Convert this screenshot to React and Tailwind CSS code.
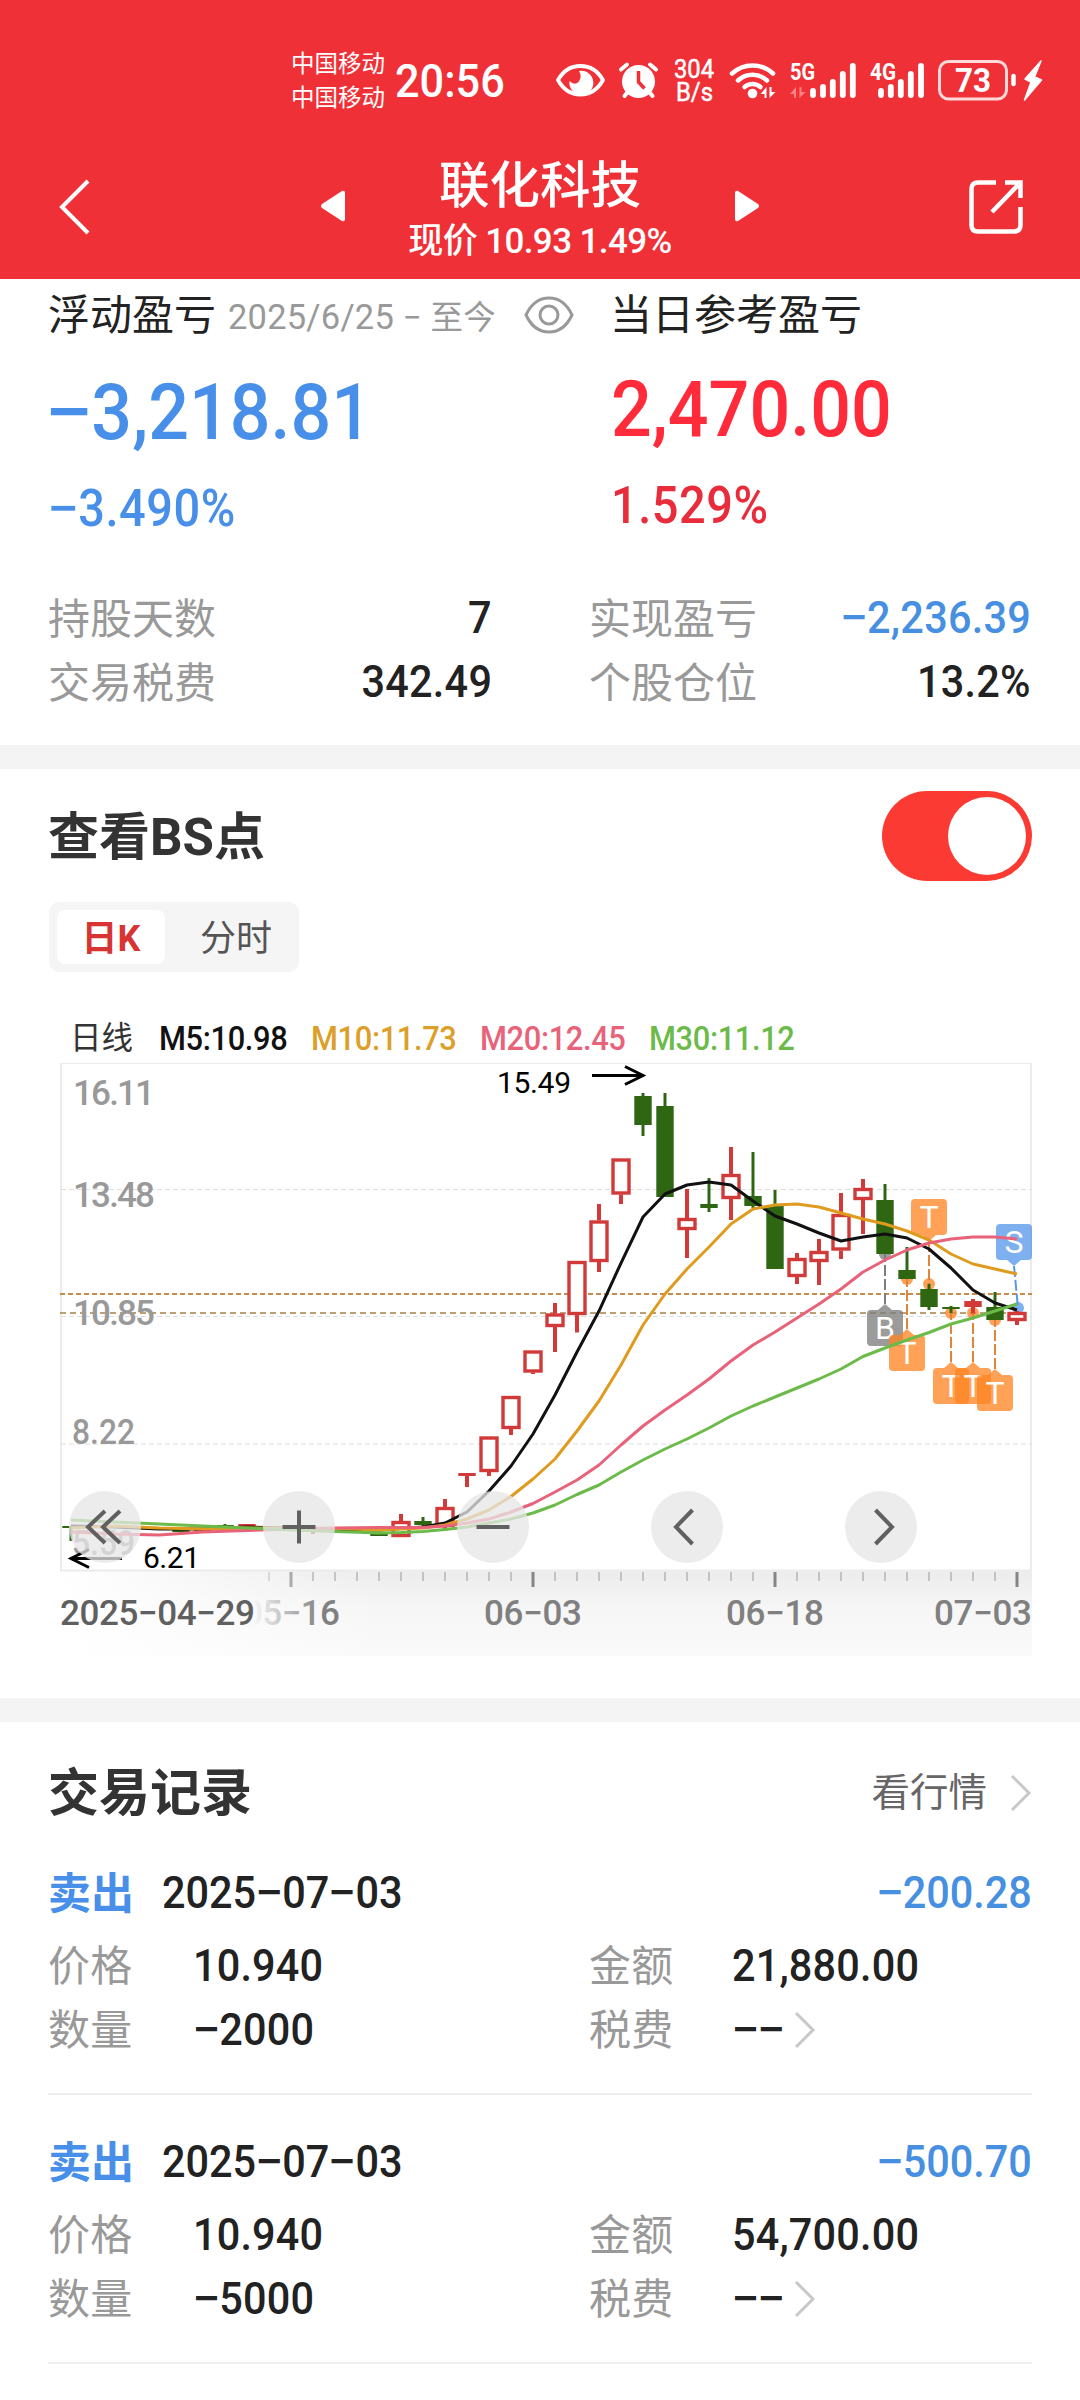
import React, { useState } from "react";

const FONT = "font-[Roboto,'Noto_Sans_CJK_SC',sans-serif]";

const stats = [
  { label: "持股天数", value: "7" },
  { label: "实现盈亏", value: "−2,236.39", loss: true },
  { label: "交易税费", value: "342.49" },
  { label: "个股仓位", value: "13.2%" },
];

const records = [
  { side: "卖出", date: "2025−07−03", profit: "−200.28", price: "10.940", amount: "21,880.00", count: "−2000", fee: "−−" },
  { side: "卖出", date: "2025−07−03", profit: "−500.70", price: "10.940", amount: "54,700.00", count: "−5000", fee: "−−" },
];

// [x, body top, body bottom, high, low, up, filled]
const candles = [
  [71, 1526, 1528, 1526, 1541, false],
  [159, 1528, 1530, 1528, 1530, false],
  [181, 1530, 1532, 1530, 1532, false],
  [203, 1529, 1531, 1529, 1531, true, true],
  [225, 1525, 1527, 1524, 1527, false],
  [247, 1524, 1526, 1524, 1526, true, true],
  [313, 1529, 1531, 1528, 1534, true, true],
  [379, 1534, 1536, 1534, 1536, false],
  [401, 1521, 1537, 1514, 1537, true],
  [423, 1521, 1525, 1517, 1527, false],
  [445, 1507, 1527, 1499, 1531, true],
  [467, 1473, 1476, 1473, 1487, true, true],
  [489, 1436.5, 1472, 1436.5, 1476, true],
  [511, 1396, 1429, 1396, 1435, true],
  [533, 1350.5, 1372.5, 1350.5, 1374, true],
  [555, 1313.5, 1327, 1303, 1352, true],
  [577, 1261, 1315, 1261, 1332.5, true],
  [599, 1220.5, 1262, 1204, 1272, true],
  [621, 1158.5, 1194.5, 1158.5, 1204, true],
  [643, 1096, 1125, 1093, 1136, false],
  [665, 1106, 1197, 1093, 1197, false],
  [687, 1218, 1230, 1189, 1258, true],
  [709, 1204, 1208, 1178, 1212, false],
  [731, 1174, 1199, 1147, 1220, true],
  [753, 1196, 1206, 1152, 1208, false],
  [775, 1205, 1269, 1190, 1269, false],
  [797, 1258, 1277, 1253, 1284, true],
  [819, 1251, 1262, 1239, 1285, true],
  [841, 1214, 1250.5, 1193, 1259, true],
  [863, 1188, 1200, 1179, 1234, true],
  [885, 1200, 1254, 1184, 1254, false],
  [907, 1270, 1279, 1247, 1279, false],
  [929, 1289, 1307, 1284, 1310, false],
  [951, 1307, 1309, 1306, 1313, false],
  [973, 1301, 1307, 1299, 1314, true, true],
  [995, 1307, 1320, 1292, 1320, false],
  [1017, 1312, 1321, 1311, 1325, true],
];

const lines = {
  m5: "71,1526 115,1527 159,1529 203,1529 247,1527 291,1528 335,1530 379,1530 423,1527 445,1523 467,1512 489,1491 511,1466 533,1434 555,1395 577,1352 599,1311 621,1263 643,1217 665,1194 687,1185 709,1182 731,1185 753,1201 775,1216 797,1224 819,1233 841,1241 863,1237 885,1234 907,1238 929,1249 951,1268 973,1290 995,1303 1017,1310",
  m10: "71,1528 115,1526 159,1528 203,1529 247,1528 291,1528 335,1528.5 379,1530 423,1528 445,1525 467,1519 489,1510 511,1496.5 533,1479 555,1459 577,1431 599,1401 621,1365 643,1325 665,1294 687,1269 709,1247 731,1224 753,1209 775,1205 797,1204 819,1207 841,1213 863,1219 885,1224 907,1231 929,1240 951,1254 973,1264 995,1269 1017,1274",
  m20: "71,1532 115,1534 159,1535 203,1532 247,1530.5 291,1529 335,1528 379,1527.5 423,1527.5 445,1526 467,1523 489,1519 511,1512 533,1503.5 555,1492 577,1480 599,1465 621,1445 643,1426 665,1410 687,1395 709,1379 731,1361 753,1345 775,1332 797,1318 819,1304 841,1289 863,1272 885,1260 907,1250 929,1243 951,1239 973,1237 995,1237 1017,1239",
  m30: "71,1520 115,1522 159,1524 203,1526 247,1528 291,1530 335,1531.5 379,1533 401,1532.5 423,1531.5 445,1529.5 467,1527 489,1523 511,1519 533,1513 555,1505 577,1494.5 599,1485 621,1472 643,1460 665,1449 687,1439 709,1428 731,1416 753,1406 775,1397 797,1388 819,1379 841,1369 863,1356.5 885,1348 907,1340 929,1332.5 951,1324 973,1318 995,1311 1017,1304",
};

const tags = [
  { x: 885, dot: 1254, tip: 1304, text: "B", color: "#7d7d7d" },
  { x: 907, dot: 1279, tip: 1329, text: "T", color: "#ff8523" },
  { x: 929, dot: 1284, tip: 1241, text: "T", color: "#ff8523", down: true },
  { x: 951, dot: 1313, tip: 1362, text: "T", color: "#ff8523" },
  { x: 973, dot: 1313, tip: 1362, text: "T", color: "#ff8523" },
  { x: 995, dot: 1320, tip: 1369, text: "T", color: "#ff8523" },
  { x: 1014, dotX: 1018, dot: 1308, tip: 1266, text: "S", color: "#5698ec", down: true },
];

// Figures are set slightly condensed, with a wider minus sign
function Num({ children, right }) {
  return (
    <span className={`inline-block scale-x-[0.92] whitespace-nowrap ${right ? "origin-right" : "origin-left"}`}>
      {children.split(/(−)/).map((part, i) =>
        part === "−" ? (
          <span key={i} className="mx-[0.035em] inline-block scale-x-[1.22]">
            −
          </span>
        ) : (
          part
        )
      )}
    </span>
  );
}

function StatusBar() {
  return (
    <div className="flex h-[125px] items-start pt-[45px] pl-[291px] text-white">
      <div className="flex w-[104px] flex-col pt-[2px] text-[23.5px] leading-[34px]">
        <span>中国移动</span>
        <span>中国移动</span>
      </div>
      <div className="h-[70px] w-[145px] text-[47px] leading-[71px] font-medium">
        <Num>20:56</Num>
      </div>
      <svg width="540" height="80" viewBox="540 45 540 80" className="block shrink-0" fill="none" stroke="#fff">
        <path d="M558 80 Q566 66 580.5 66 Q595 66 603 80 Q595 94.500 580.5 94.500 Q566 94.500 558 80Z" strokeWidth="3.8" strokeLinejoin="round" />
        <path d="M579 71 a12 12 0 1 1 -9.500 10 q5 5 9 1 q4 -5 0.500 -11Z" fill="#fff" stroke="none" />
        <circle cx="638.5" cy="81.500" r="16.500" fill="#fff" stroke="none" />
        <path d="M621 69.500l6 -5M656 69.500l-6 -5M624.500 96l4 -5M652.500 96l-4 -5" strokeWidth="4" strokeLinecap="round" />
        <path d="M638.500 71v11l6 6.500" stroke="#f03037" strokeWidth="3.500" />
        <text x="674" y="77.500" fontSize="25" textLength="40" lengthAdjust="spacingAndGlyphs" fill="#fff" stroke="#fff" strokeWidth="0.5">304</text>
        <text x="676" y="100.500" fontSize="25" textLength="37" lengthAdjust="spacingAndGlyphs" fill="#fff" stroke="#fff" strokeWidth="0.5">B/s</text>
        <g strokeWidth="4.500" strokeLinecap="round">
          <path d="M732 73.500a30 30 0 0 1 41 0" />
          <path d="M738 80.500a21 21 0 0 1 29 0" />
          <path d="M744.500 87a12 12 0 0 1 16 0" />
        </g>
        <circle cx="752.500" cy="93.500" r="4.800" fill="#fff" stroke="none" />
        <path d="M766.500 87v11h-2v-4h-4ZM769.500 87v11l6 -6h-4v-5Z" fill="#fff" stroke="none" />
        <text x="790" y="79.500" fontSize="24" fontWeight="700" textLength="25" lengthAdjust="spacingAndGlyphs" fill="#fff" stroke="none">5G</text>
        <path d="M796 87v11h-2v-4h-4ZM799.500 87v11l6 -6h-4v-5Z" fill="#ff8085" stroke="none" />
        <g strokeWidth="5.800" strokeLinecap="round">
          <path d="M813 91v4M823 87v8M832.800 82v13M842.800 74v21M852.800 66v29" />
          <path d="M881 91v4M890.800 87v8M900.800 82v13M910.800 74v21M921 66v29" />
        </g>
        <text x="870" y="79.500" fontSize="24" fontWeight="700" textLength="26" lengthAdjust="spacingAndGlyphs" fill="#fff" stroke="none">4G</text>
        <rect x="939.500" y="61.500" width="67" height="37.500" rx="9" strokeWidth="3" stroke="#ffd9da" />
        <text x="955" y="92" fontSize="34" fontWeight="700" textLength="36" lengthAdjust="spacingAndGlyphs" fill="#fff" stroke="none">73</text>
        <path d="M1013.500 76v8" strokeWidth="4.500" strokeLinecap="round" />
        <path d="M1041 61l-16 18 6 3 -6.500 18 17 -20 -7 -3Z" fill="#fff" strokeWidth="1.500" strokeLinejoin="round" />
      </svg>
    </div>
  );
}

function Header() {
  return (
    <header className="h-[279px] bg-[#f03037]">
      <StatusBar />
      <div className="flex items-start pl-[57px] text-white">
        <svg width="34" height="58" viewBox="0 0 34 58" className="mt-[53px]" fill="none" stroke="#fff" strokeWidth="4">
          <path d="M31 3 L5 29 L31 55" />
        </svg>
        <svg width="26" height="34" viewBox="0 0 26 34" className="mt-[64px] ml-[229px]" fill="#fff">
          <path d="M22 2 Q25 1 25 4 V30 Q25 33 22 32 L2 19 Q0 17 2 15Z" />
        </svg>
        <div className="ml-[54px] flex w-[280px] flex-col items-center pt-[28px]">
          <div className="text-[50.500px] leading-[66px] font-medium">联化科技</div>
          <div className="text-[35px] leading-[45px] font-medium tracking-[-0.600px] whitespace-nowrap">现价 10.93 1.49%</div>
        </div>
        <svg width="26" height="34" viewBox="0 0 26 34" className="mt-[64px] ml-[54px]" fill="#fff">
          <path d="M4 2 Q1 1 1 4 V30 Q1 33 4 32 L24 19 Q26 17 24 15Z" />
        </svg>
        <svg width="56" height="56" viewBox="0 0 56 56" className="mt-[54px] ml-[208px]" fill="none" stroke="#fff" strokeWidth="4.500">
          <path d="M28 3.500 H10 Q3.500 3.500 3.500 10 V46 Q3.500 52.500 10 52.500 H46 Q52.500 52.500 52.500 46 V28" />
          <path d="M37 3.500 H52.500 V19 M52 4 L24 33" />
        </svg>
      </div>
    </header>
  );
}

function Summary() {
  return (
    <section className="h-[466px] px-[48px]">
      <div className="flex h-[72px] items-center">
        <span className="w-[180px] pt-px text-[42px] text-[#222]">浮动盈亏</span>
        <span className="w-[296px] pt-[6px] text-[34.500px] tracking-[0.2px] whitespace-nowrap text-[#999]">
          2025/6/25 <span className="text-[33px]">−</span> <span className="text-[32.500px]">至今</span>
        </span>
        <svg width="50" height="38" viewBox="0 0 50 38" fill="none" stroke="#999" strokeWidth="3">
          <path d="M2 19 Q10 2 25 2 Q40 2 48 19 Q40 36 25 36 Q10 36 2 19Z" />
          <circle cx="25" cy="19" r="9" />
        </svg>
        <span className="ml-[36px] pt-px text-[42px] text-[#222]">当日参考盈亏</span>
      </div>
      <div className="flex h-[235px] font-medium">
        <div className="w-[563px] text-[#478fe8]">
          <div className="-ml-[2px] h-[123px] text-[78px] leading-[123px]">
            <Num>−3,218.81</Num>
          </div>
          <div className="h-[69px] text-[51px] leading-[70px] tracking-[0.600px]">
            <Num>−3.490%</Num>
          </div>
        </div>
        <div>
          <div className="h-[117px] text-[78px] leading-[117px] text-[#ff2a3a]">
            <Num>2,470.00</Num>
          </div>
          <div className="h-[75px] text-[51px] leading-[76px] tracking-[0.600px] text-[#e92c3b]">
            <Num>1.529%</Num>
          </div>
        </div>
      </div>
      <div className="grid grid-cols-[444px_442px] gap-x-[97px]">
        {stats.map(({ label, value, loss }) => (
          <div key={label} className="flex h-[64px] items-center justify-between">
            <span className="pt-[2px] text-[42px] text-[#999]">{label}</span>
            <span className={`text-[45px] font-medium tracking-[0.3px] ${loss ? "text-[#478fe0]" : "text-[#222]"}`}>
              <Num right>{value}</Num>
            </span>
          </div>
        ))}
      </div>
    </section>
  );
}

function Candle({ data }) {
  const [x, top, bottom, high, low, up, filled] = data;
  const color = up ? "#d23a3a" : "#2f6612";
  const hollow = up && !filled;
  return (
    <g stroke={color} strokeWidth={up ? 4 : 3}>
      {high < top && <path d={`M${x} ${high}V${top}`} />}
      {low > bottom && <path d={`M${x} ${bottom}V${low}`} />}
      {hollow ? (
        <rect x={x - 8} y={top + 1.5} width="16" height={bottom - top - 3} fill="#fff" strokeWidth="3.400" />
      ) : (
        <rect x={x - 8.7} y={top} width="17.4" height={bottom - top} fill={color} stroke="none" />
      )}
    </g>
  );
}

function Tag({ x, dotX = x, dot, tip, text, color, down }) {
  const boxTop = down ? tip - 42 : tip + 6;
  const base = down ? tip - 6 : tip + 6;
  return (
    <g>
      <path d={`M${x} ${tip}L${dotX} ${dot}`} stroke={color === "#ff8523" ? "#e2853c" : color} strokeWidth="2" strokeDasharray="11 3" />
      <g fill={color} opacity="0.76">
        <rect x={x - 18} y={boxTop} width="36" height="36" rx="4" />
        <path d={`M${x - 7} ${base}L${x} ${tip}L${x + 7} ${base}Z`} />
      </g>
      <text x={x} y={boxTop + 29} fontSize="32" fill="#fff" textAnchor="middle">{text}</text>
    </g>
  );
}

function RoundButton({ x, d }) {
  return (
    <g>
      <circle cx={x} cy="1527" r="36" fill="#e6e6e6" opacity="0.76" />
      <path d={d} transform={`translate(${x} 1527)`} fill="none" stroke="#606060" strokeWidth="4" />
    </g>
  );
}

function KLineChart() {
  const ticks = Array.from({ length: 35 }, (_, i) => 269 + i * 22);
  return (
    <svg width="1080" height="593" viewBox="0 1063 1080 593" className="block">
      <defs>
        <linearGradient id="axisDown" x1="0" y1="0" x2="0" y2="1">
          <stop offset="0" stopColor="#ececec" />
          <stop offset="0.45" stopColor="#f6f6f6" />
          <stop offset="1" stopColor="#fafafa" />
        </linearGradient>
        <linearGradient id="axisFade" x1="0" y1="0" x2="1" y2="0">
          <stop offset="0" stopColor="#fff" />
          <stop offset="1" stopColor="#fff" stopOpacity="0" />
        </linearGradient>
        <linearGradient id="dateFade" gradientUnits="userSpaceOnUse" x1="252" y1="0" x2="322" y2="0">
          <stop offset="0" stopColor="#808080" stopOpacity="0" />
          <stop offset="1" stopColor="#808080" />
        </linearGradient>
      </defs>

      <rect x="61" y="1571" width="971" height="85" fill="url(#axisDown)" />
      <rect x="60" y="1571" width="330" height="85" fill="url(#axisFade)" />
      <rect x="61" y="1063" width="970" height="507.500" fill="#fff" stroke="#ebebeb" strokeWidth="2" />

      <g fill="none" strokeDasharray="5 3">
        <path d="M61 1189.500H1031M61 1316.500H1031M61 1444H1031" stroke="#dedede" strokeWidth="1" />
        <path d="M60 1294H1032" stroke="#c98a4b" strokeWidth="2" />
        <path d="M60 1313H1017" stroke="#bd9f74" strokeWidth="2" strokeDasharray="6 4" />
      </g>

      <g fill="#999" fontSize="35" fontWeight="500">
        <text x="73" y="1105" textLength="82">16.11</text>
        <text x="73" y="1207" textLength="82">13.48</text>
        <text x="73" y="1325" textLength="82">10.85</text>
        <text x="72" y="1443.500" textLength="63" lengthAdjust="spacingAndGlyphs">8.22</text>
        <text x="72" y="1554.500" textLength="63" lengthAdjust="spacingAndGlyphs">5.59</text>
      </g>

      {tags.map(({ x, dotX = x, dot, color }) => (
        <circle key={x} cx={dotX} cy={dot} r="6" fill={color} opacity="0.76" />
      ))}
      {candles.map((data) => (
        <Candle key={data[0]} data={data} />
      ))}
      {tags.map((tag) => (
        <Tag key={tag.x} {...tag} />
      ))}

      <g fill="none" strokeWidth="3" strokeLinejoin="round">
        <polyline points={lines.m5} stroke="#111" />
        <polyline points={lines.m10} stroke="#de9b1e" />
        <polyline points={lines.m20} stroke="#e8627a" />
        <polyline points={lines.m30} stroke="#6cbb4a" />
      </g>

      <g fill="none" stroke="#000" strokeWidth="3">
        <path d="M592 1075.500H643M625 1066.500L643 1075.500L625 1084.500" />
        <path d="M122 1558.500H71M89 1549.500L71 1558.500L89 1567.500" />
      </g>
      <g fill="#000" fontSize="30">
        <text x="497" y="1093" textLength="74">15.49</text>
        <text x="143" y="1567.500" textLength="57">6.21</text>
      </g>

      <RoundButton x={105} d="M0 -16L-17 0L0 16M15 -16L-2 0L15 16" />
      <RoundButton x={299} d="M-16.500 0H16.500M0 -16.500V16.500" />
      <RoundButton x={493} d="M-16.500 0H16.500" />
      <RoundButton x={687} d="M5.500 -17L-11 0L5.500 17" />
      <RoundButton x={881} d="M-5.500 -17L11 0L-5.500 17" />

      {ticks.map((x) => {
        const major = (x - 291) % 242 === 0;
        return (
          <rect
            key={x}
            x={major ? x - 1.5 : x - 0.5}
            y="1572"
            width={major ? 3 : 1}
            height={major ? 15 : 9}
            fill={major ? "#858585" : "#999"}
            opacity={x < 300 ? 0.65 : 1}
          />
        );
      })}

      <g fontSize="35" fontWeight="500" fill="#808080">
        <text x="60" y="1624.500" textLength="195" fill="#606060">2025−04−29</text>
        <text x="243" y="1624.500" textLength="97" fill="url(#dateFade)">05−16</text>
        <text x="484" y="1624.500" textLength="98">06−03</text>
        <text x="726" y="1624.500" textLength="98">06−18</text>
        <text x="934" y="1624.500" textLength="98">07−03</text>
      </g>
    </svg>
  );
}

function BsPoints() {
  const [enabled, setEnabled] = useState(true);
  return (
    <section className="h-[929px]">
      <div className="flex h-[133px] items-center justify-between px-[48px]">
        <h2 className="pt-[5px] text-[51px] font-bold text-[#333]">查看BS点</h2>
        <button
          onClick={() => setEnabled(!enabled)}
          aria-label="查看BS点"
          className={`flex h-[90px] w-[150px] items-center rounded-full px-[6px] ${enabled ? "justify-end bg-[#fb3b33]" : "justify-start bg-gray-300"}`}
        >
          <span className="h-[78px] w-[78px] rounded-full bg-white" />
        </button>
      </div>
      <div className="ml-[49px] flex h-[70px] w-[250px] items-center rounded-[10px] bg-[#f5f5f5] px-[8px]">
        <div className="flex h-[54px] w-[108px] items-center justify-center rounded-[8px] bg-white pt-[3px] text-[36px] font-bold text-[#d93434]">日K</div>
        <div className="flex-1 pt-[3px] pl-[16px] text-center text-[36px] text-[#555]">分时</div>
      </div>
      <div className="flex h-[91px] items-center pt-[43px] pl-[70px] text-[33.500px] font-medium tracking-[-0.400px] whitespace-nowrap">
        <span className="w-[89px] text-[31.500px] font-normal tracking-normal text-[#333]">日线</span>
        <span className="w-[152px] text-[#111]">
          <Num>M5:10.98</Num>
        </span>
        <span className="w-[169px] text-[#dc9f2a]">
          <Num>M10:11.73</Num>
        </span>
        <span className="w-[169px] text-[#e8627a]">
          <Num>M20:12.45</Num>
        </span>
        <span className="text-[#6cbb4a]">
          <Num>M30:11.12</Num>
        </span>
      </div>
      <KLineChart />
    </section>
  );
}

function Chevron() {
  return (
    <svg width="22" height="38" viewBox="0 0 22 38" fill="none" stroke="#c8c8c8" strokeWidth="3">
      <path d="M2 2 L19 19 L2 36" />
    </svg>
  );
}

function Label({ children }) {
  return <span className="pt-px text-[42px] leading-[63px] font-normal text-[#999]">{children}</span>;
}

function Record({ record }) {
  return (
    <div className="h-[269px] border-b-2 border-[#eee] text-[45px] font-medium text-[#222]">
      <div className="flex h-[100px] items-center pt-[34px]">
        <span className="w-[114px] pt-[2px] text-[43px] font-bold text-[#478fe8]">{record.side}</span>
        <span className="flex-1">
          <Num>{record.date}</Num>
        </span>
        <span className="text-[#478fe0]">
          <Num right>{record.profit}</Num>
        </span>
      </div>
      <div className="grid grid-cols-[145px_396px_143px_1fr] pt-[8px] leading-[64px] tracking-[0.2px]">
        <Label>价格</Label>
        <Num>{record.price}</Num>
        <Label>金额</Label>
        <Num>{record.amount}</Num>
        <Label>数量</Label>
        <Num>{record.count}</Num>
        <Label>税费</Label>
        <span className="flex items-center gap-[5px]">
          <Num>{record.fee}</Num>
          <Chevron />
        </span>
      </div>
    </div>
  );
}

function Records() {
  return (
    <section className="px-[48px]">
      <div className="flex h-[104px] items-end justify-between">
        <h2 className="text-[51px] leading-[64px] font-bold text-[#333]">交易记录</h2>
        <div className="flex h-[67px] items-center gap-[23px] text-[38.500px] text-[#666]">
          看行情
          <Chevron />
        </div>
      </div>
      {records.map((record) => (
        <Record key={record.profit} record={record} />
      ))}
    </section>
  );
}

export default function App() {
  return (
    <div className={`h-[2400px] w-[1080px] overflow-hidden bg-white ${FONT}`}>
      <Header />
      <Summary />
      <div className="h-[24px] bg-[#f4f4f4]" />
      <BsPoints />
      <div className="h-[24px] bg-[#f4f4f4]" />
      <Records />
    </div>
  );
}
